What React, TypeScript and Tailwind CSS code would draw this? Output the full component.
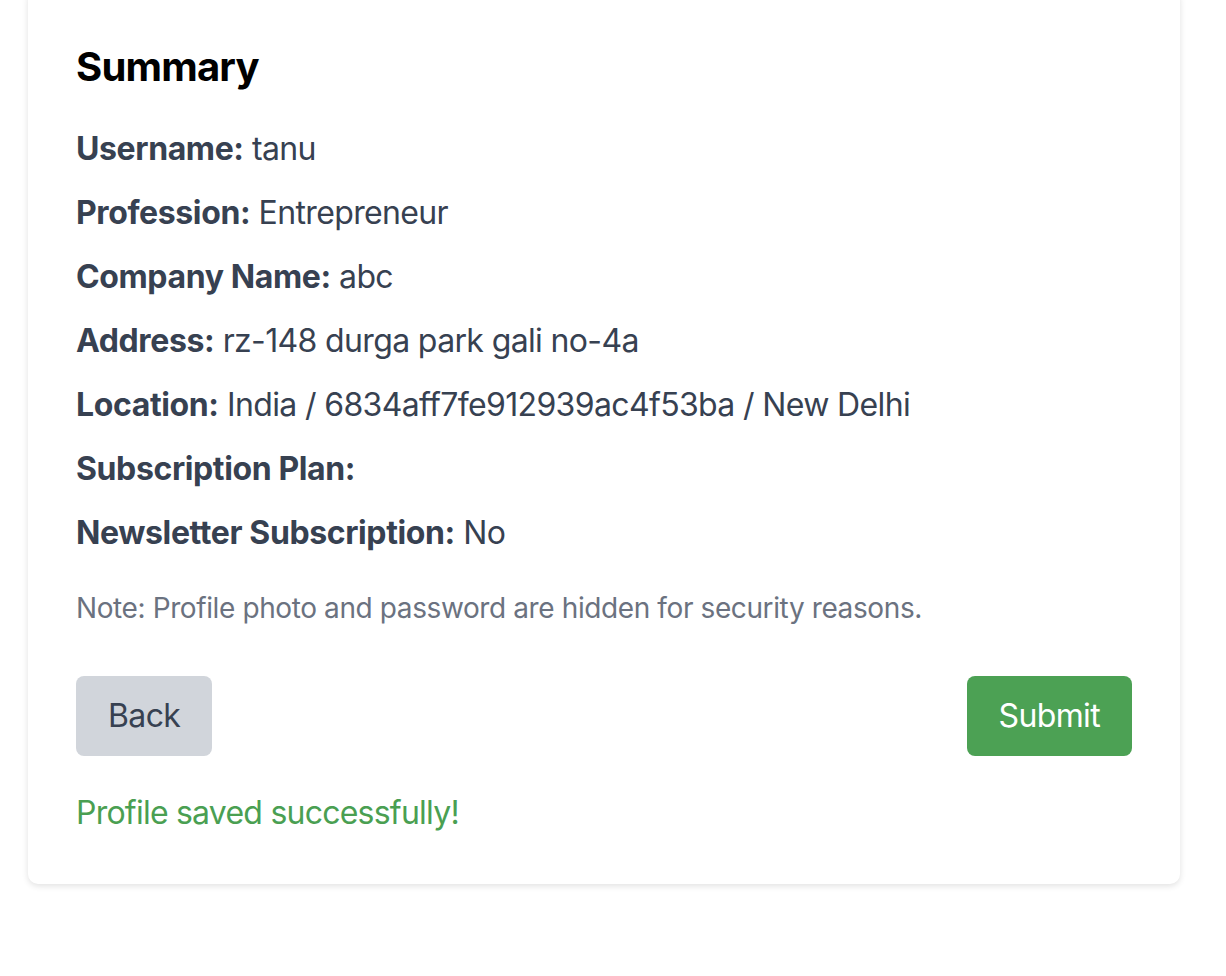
import React from 'react';

const rows: { label: string; value: string }[] = [
  { label: 'Username:', value: 'tanu' },
  { label: 'Profession:', value: 'Entrepreneur' },
  { label: 'Company Name:', value: 'abc' },
  { label: 'Address:', value: 'rz-148 durga park gali no-4a' },
  { label: 'Location:', value: 'India / 6834aff7fe912939ac4f53ba / New Delhi' },
  { label: 'Subscription Plan:', value: '' },
  { label: 'Newsletter Subscription:', value: 'No' },
];

const App = () => {
  return (
    <div className="min-h-[976px] bg-white" style={{ fontFamily: 'Inter, "Noto Sans", sans-serif' }}>
      <div className="ml-[28px] mt-[-11px] w-[1152px] rounded-[10px] bg-white px-[48px] pt-[50px] pb-[47px] shadow-[0_2px_6px_rgba(0,0,0,0.12)]">
        <h2 className="mb-[30px] text-[40px] font-bold leading-[56px] tracking-[-0.02em] text-black">Summary</h2>
        <div className="flex flex-col gap-[16px]">
          {rows.map((r) => (
            <p key={r.label} className="text-[32px] leading-[48px] tracking-[-0.02em] text-[#374151]">
              <span className="font-bold tracking-[-0.012em]">{r.label}</span>
              {r.value ? ' ' + r.value : ''}
            </p>
          ))}
        </div>
        <p className="mt-[31px] text-[28px] leading-[40px] tracking-[-0.014em] text-[#6b7280]">
          Note: Profile photo and password are hidden for security reasons.
        </p>
        <div className="mt-[48px] flex items-center justify-between">
          <button className="h-[80px] rounded-[8px] bg-[#d1d5db] px-[32px] text-[32px] tracking-[-0.02em] text-[#374151]">
            Back
          </button>
          <button className="h-[80px] rounded-[8px] bg-[#4ca154] px-[32px] text-[32px] tracking-[-0.02em] text-white">
            Submit
          </button>
        </div>
        <p className="mt-[33px] text-[32px] leading-[48px] tracking-[-0.024em] text-[#4a9f52]">Profile saved successfully!</p>
      </div>
    </div>
  );
};

export default App;
